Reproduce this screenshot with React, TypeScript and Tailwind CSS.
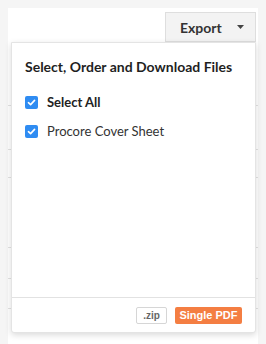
import React from "react";

const Check = () => (
  <span className="flex h-[13px] w-[13px] items-center justify-center rounded-[2px] bg-[#2f8cf2]">
    <svg width="9" height="9" viewBox="0 0 10 10" fill="none">
      <path d="M1.6 5.2 L4 7.4 L8.4 2.6" stroke="white" strokeWidth="1.8" strokeLinecap="round" strokeLinejoin="round" />
    </svg>
  </span>
);

export default function App() {
  // rows behind the dropdown (only left edge shows)
  const rows = [64, 44, 28, 70, 31, 30];

  return (
    <div className="relative h-[344px] w-[266px] bg-[#f5f5f5] p-2 font-['Lato','Liberation_Sans',sans-serif]">
      <div className="flex h-[336px] w-[250px] flex-col bg-white">
        <div className="flex justify-end pr-[2px] pt-1">
          <button className="flex h-[30px] w-[91px] items-center border border-[#dedede] bg-[#f3f3f3] pl-[14px] text-[14px] font-bold text-[#333]">
            Export
            <svg className="ml-[15px]" width="7" height="4" viewBox="0 0 7 4">
              <path d="M0 0 H7 L3.5 4 Z" fill="#444" />
            </svg>
          </button>
        </div>
        {rows.map((h, i) => (
          <div key={i} className="border-b border-[#e2e2e2]" style={{ height: h }} />
        ))}
      </div>

      {/* dropdown menu */}
      <div className="absolute left-[11px] top-[42px] flex h-[291px] w-[245px] flex-col rounded-b-[3px] border border-[#e4e4e4] bg-white shadow-[0_2px_6px_rgba(0,0,0,0.15)]">
        <div className="flex-1 pl-[13px] pt-[14px]">
          <h2 className="text-[14px] font-bold leading-5 text-[#1f1f1f]">Select, Order and Download Files</h2>
          <div className="mt-[16px] flex items-center gap-[9px]">
            <Check />
            <span className="text-[13px] font-bold text-[#222]">Select All</span>
          </div>
          <div className="mt-[9px] flex items-center gap-[9px]">
            <Check />
            <span className="text-[13px] text-[#333]">Procore Cover Sheet</span>
          </div>
        </div>
        <div className="flex justify-end gap-[8px] border-t border-[#e2e2e2] px-[13px] pb-[8px] pt-[9px] font-['Liberation_Sans',sans-serif]">
          <button className="h-[17px] w-[31px] rounded-[2px] border border-[#d6d6d6] bg-white text-[10px] font-bold leading-none text-[#666]">
            .zip
          </button>
          <button className="h-[17px] w-[67px] rounded-[2px] bg-[#f47e42] text-[11px] font-bold leading-none text-white">
            Single PDF
          </button>
        </div>
      </div>
    </div>
  );
}
